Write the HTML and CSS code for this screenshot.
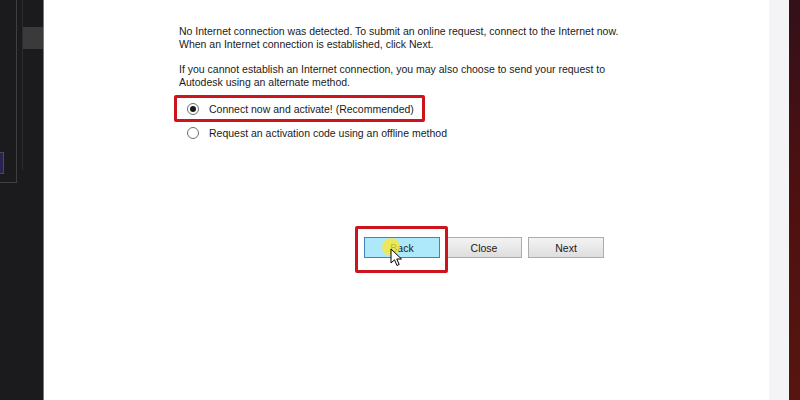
FILE: index.html
```html
<!DOCTYPE html>
<html lang="en">
<head>
<meta charset="utf-8">
<title>Activation</title>
<link rel="stylesheet" href="styles.css">
</head>
<body>
<div class="screen">
  <aside class="side-left">
    <div class="frame">
      <div class="purple-tile"></div>
    </div>
    <div class="col-b">
      <div class="gray-tile"></div>
    </div>
  </aside>
  <main class="dialog">
    <p class="para">No Internet connection was detected. To submit an online request, connect to the Internet now.<br>When an Internet connection is established, click Next.</p>
    <p class="para para-last">If you cannot establish an Internet connection, you may also choose to send your request to<br>Autodesk using an alternate method.</p>
    <div class="options">
      <label class="option highlight"><span class="radio checked"></span><span>Connect now and activate! (Recommended)</span></label>
      <label class="option"><span class="radio"></span><span>Request an activation code using an offline method</span></label>
    </div>
    <div class="buttons">
      <div class="btn-wrap">
        <button class="btn btn-hover">Back</button>
        <span class="annot-box"></span>
        <span class="click-dot"></span>
        <svg class="cursor" width="13" height="20" viewBox="0 0 13 20"><path d="M1 1 L1 15 L4.5 11.8 L7 17.5 L9.2 16.5 L6.8 11 L11.5 11 Z" fill="#fff" stroke="#000" stroke-width="1" stroke-linejoin="round"/></svg>
      </div>
      <button class="btn">Close</button>
      <button class="btn">Next</button>
    </div>
  </main>
  <div class="strip"></div>
  <div class="edge"></div>
</div>
</body>
</html>
```
FILE: styles.css
```css
html, body {
  margin: 0;
  padding: 0;
  width: 800px;
  height: 400px;
  overflow: hidden;
}
body {
  font-family: "Liberation Sans", Arial, sans-serif;
  font-size: 10.5px;
  color: #1a1a1a;
}
.screen {
  display: flex;
  width: 800px;
  height: 400px;
}
.side-left {
  width: 43px;
  background: #1b1b1d;
  border-right: 1px solid #7a7a7a;
  display: flex;
  align-items: flex-start;
}
.frame {
  width: 17px;
  height: 183px;
  border-right: 1px solid #3f3f41;
  border-bottom: 1px solid #3f3f41;
  box-sizing: border-box;
  display: flex;
  flex-direction: column;
  padding-top: 152px;
}
.purple-tile {
  width: 3px;
  height: 20px;
  background: #2b2250;
  border: 1px solid #4a4a55;
  border-left: none;
}
.col-b {
  flex: 1;
  height: 170px;
  border-left: 1px solid #2c2c2e;
  margin-left: 5px;
  padding-top: 27px;
  box-sizing: border-box;
}
.gray-tile {
  width: 20px;
  height: 22px;
  background: #3a3a3b;
}
.dialog {
  flex: 1;
  background: #ffffff;
  padding: 25px 0 0 135px;
  box-sizing: border-box;
}
.para {
  margin: 0 0 12px 0;
  line-height: 13px;
}
.para-last {
  margin-bottom: 6px;
}
.options {
  display: flex;
  flex-direction: column;
  align-items: flex-start;
}
.option {
  display: inline-flex;
  align-items: center;
  gap: 10px;
  height: 21px;
  margin-left: -5px;
  padding: 0 8px 0 10px;
  border: 3px solid transparent;
  border-radius: 2px;
}
.option + .option {
  margin-top: -3px;
}
.option.highlight {
  border-color: #cc141c;
}
.radio {
  width: 12px;
  height: 12px;
  box-sizing: border-box;
  border: 1px solid #6e6e6e;
  border-radius: 50%;
  background: #fff;
  display: flex;
  align-items: center;
  justify-content: center;
}
.radio.checked::after {
  content: "";
  width: 6px;
  height: 6px;
  border-radius: 50%;
  background: #1a1a1a;
}
.buttons {
  display: flex;
  gap: 6px;
  margin-top: 91px;
  margin-left: 185px;
}
.btn-wrap {
  position: relative;
  display: flex;
}
.btn {
  width: 76px;
  height: 21px;
  font-family: "Liberation Sans", Arial, sans-serif;
  font-size: 10.5px;
  color: #1a1a1a;
  border: 1px solid #acacac;
  border-radius: 0;
  background: linear-gradient(#f3f3f3, #dedede);
  padding: 0;
}
.btn-hover {
  background: #aee8fb;
  border-color: #3f86b8;
}
.annot-box {
  position: absolute;
  left: -9px;
  top: -11px;
  width: 93px;
  height: 47px;
  box-sizing: border-box;
  border: 3px solid #cc141c;
  border-radius: 2px;
}
.click-dot {
  position: absolute;
  left: 18px;
  top: 1px;
  width: 18px;
  height: 18px;
  border-radius: 50%;
  background: rgba(255, 232, 40, 0.75);
}
.cursor {
  position: absolute;
  left: 26px;
  top: 11px;
}
.strip {
  width: 20px;
  background: #f4f4f6;
}
.edge {
  width: 11px;
  background: linear-gradient(#33101a, #4f1010 50%, #56150f);
}
```
